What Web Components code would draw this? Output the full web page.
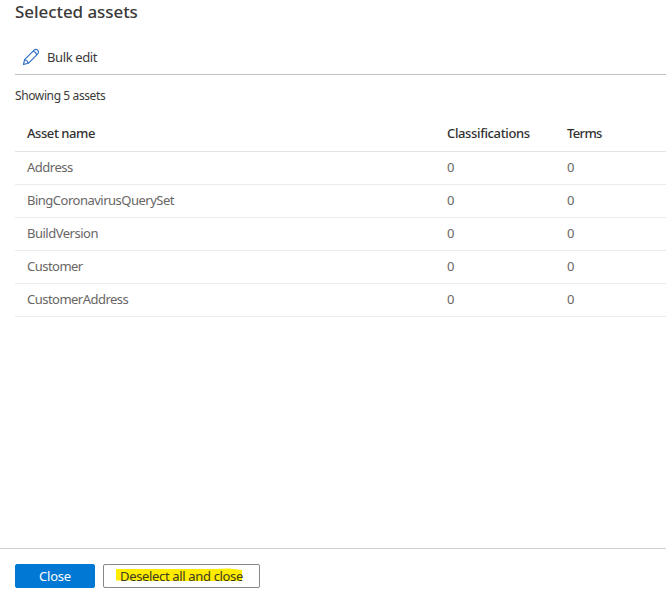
<!DOCTYPE html>
<html lang="en">
<head>
<meta charset="utf-8">
<title>Selected assets</title>
<style>
html,body{margin:0;height:100%;overflow:hidden;background:#fff}
body{font:13px/18px "Noto Sans","Open Sans",sans-serif;color:#3b3a39}
</style>
</head>
<body>
<assets-panel></assets-panel>
<script>
function define(name, html, setup) {
  const template = document.createElement('template');
  template.innerHTML = html;
  customElements.define(name, class extends HTMLElement {
    connectedCallback() {
      if (this.shadowRoot) return;
      this.attachShadow({mode: 'open'}).append(template.content.cloneNode(true));
      if (setup) setup(this);
    }
  });
}

// A single line of text, tracked to the advance width given in its attribute.
define('text-run', `<style>:host{display:inline-block;white-space:pre;vertical-align:top}</style><slot></slot>`, el => {
  const range = document.createRange();
  range.selectNodeContents(el);
  const natural = range.getBoundingClientRect().width;
  const target = Number(el.getAttribute('width'));
  if (target) el.style.letterSpacing = ((target - natural) / el.textContent.length).toFixed(3) + 'px';
});

define('edit-icon', `<style>:host{display:block;width:18px;height:18px}svg{display:block}</style>
<svg width="18" height="18" viewBox="0 0 18 18" fill="none" stroke="#2f6fc6" stroke-width="1.15" stroke-linejoin="round">
<path d="M1.5 16.5 2.6 11.7 12.1 2.2Q13.3 1 14.7 1.5 16 2 16.4 3.3 16.8 4.7 15.8 5.8L6.3 15.3Z"/>
<path d="M2.6 11.7Q5.5 12 6.3 15.3M11 3.3Q14 3.8 14.7 6.9"/></svg>`);

define('command-bar', `<style>
:host{display:flex;box-sizing:border-box;height:34px;margin:18px 0 0 15px;padding:7px 0 0 7px;gap:7px;border-bottom:1px solid #c2c1c0}
</style><edit-icon></edit-icon><text-run width="50">Bulk edit</text-run>`);

define('asset-row', `<style>
:host{display:grid;grid-template-columns:420px 120px 1fr;box-sizing:border-box;height:33px;padding:6px 0 0 12px;border-bottom:1px solid #edebe9;color:#686665}
:host([head]){height:35px;padding-top:7px;color:#323130;font-weight:500;border-color:#e5e4e3}
</style><slot></slot>`);

define('asset-table', `<style>:host{display:block;margin:12px 0 0 15px}</style>
<asset-row head><span><text-run width="68">Asset name</text-run></span><span><text-run width="82.7">Classifications</text-run></span><span><text-run width="34.8">Terms</text-run></span></asset-row>
<asset-row><span><text-run width="45.8">Address</text-run></span><span>0</span><span>0</span></asset-row>
<asset-row><span><text-run width="147">BingCoronavirusQuerySet</text-run></span><span>0</span><span>0</span></asset-row>
<asset-row><span><text-run width="71">BuildVersion</text-run></span><span>0</span><span>0</span></asset-row>
<asset-row><span><text-run width="55.7">Customer</text-run></span><span>0</span><span>0</span></asset-row>
<asset-row><span><text-run width="101.2">CustomerAddress</text-run></span><span>0</span><span>0</span></asset-row>`);

define('panel-button', `<style>
:host{display:block;box-sizing:border-box;width:157px;height:24px;padding:2px 0 0 16px;border:1px solid #8a8886;border-radius:2px;background:#fff;color:#3b3a20}
:host([primary]){width:80px;padding-left:23px;border-color:#0078d4;background:#0078d4;color:#fff}
:host([marked]){background:#fff url('data:image/svg+xml,<svg xmlns="http://www.w3.org/2000/svg" width="155" height="22"><path d="M12 4H108L125 3.5L138 5V16H48L24 15.5H12Z" fill="%23ffec00"/></svg>') no-repeat}
</style><slot></slot>`);

define('panel-footer', `<style>:host{display:flex;box-sizing:border-box;height:48px;padding:15px 0 0 15px;gap:8px;border-top:1px solid #d2d0ce}</style>
<panel-button primary><text-run width="32">Close</text-run></panel-button>
<panel-button marked><text-run width="123">Deselect all and close</text-run></panel-button>`);

define('assets-panel', `<style>
:host{display:flex;flex-direction:column;height:596px}
h1{margin:0 0 0 15px;height:23px;font-size:17px;line-height:24px;font-weight:500}
.count{margin:12px 0 1px 15px;height:17px;font-size:12px;line-height:17px}
asset-table{flex:1}
</style>
<h1><text-run width="122.8">Selected assets</text-run></h1>
<command-bar></command-bar>
<div class="count"><text-run width="90.3">Showing 5 assets</text-run></div>
<asset-table></asset-table>
<panel-footer></panel-footer>`);
</script>
</body>
</html>
